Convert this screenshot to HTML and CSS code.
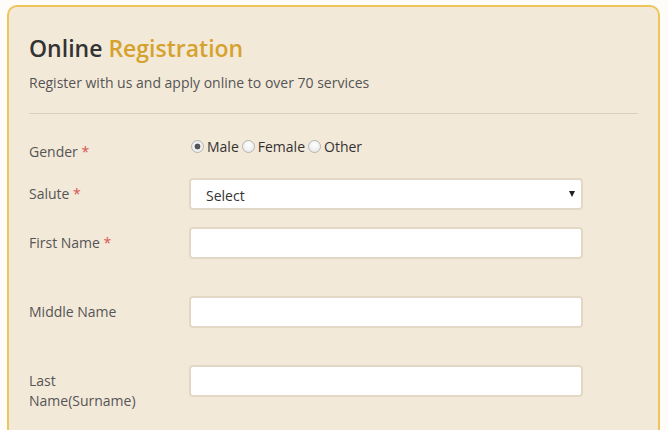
FILE: index.html
```html
<!DOCTYPE html>
<html lang="en">
<head>
<meta charset="utf-8">
<title>Online Registration</title>
<link rel="stylesheet" href="styles.css">
</head>
<body>
<div class="card">
  <h1 class="title">Online <span class="accent">Registration</span></h1>
  <p class="subtitle">Register with us and apply online to over 70 services</p>
  <hr class="divider">
  <form class="form">
    <div class="row row-gender">
      <label class="label">Gender <span class="req">*</span></label>
      <div class="field radios">
        <label class="radio"><input type="radio" name="g" checked> Male</label>
        <label class="radio"><input type="radio" name="g"> Female</label>
        <label class="radio"><input type="radio" name="g"> Other</label>
      </div>
    </div>
    <div class="row row-short">
      <label class="label">Salute <span class="req">*</span></label>
      <div class="field select-wrap">
        <select class="control select"><option>Select</option></select>
      </div>
    </div>
    <div class="row row-tall">
      <label class="label">First Name <span class="req">*</span></label>
      <div class="field"><input class="control" type="text"></div>
    </div>
    <div class="row row-tall">
      <label class="label">Middle Name</label>
      <div class="field"><input class="control" type="text"></div>
    </div>
    <div class="row">
      <label class="label">Last<br>Name(Surname)</label>
      <div class="field"><input class="control" type="text"></div>
    </div>
  </form>
</div>
</body>
</html>
```

FILE: styles.css
```css
html, body {
  margin: 0;
  padding: 0;
  background: #fefcf8;
  font-family: "Open Sans", "Liberation Sans", sans-serif;
  color: #555;
}
.card {
  margin: 5px 0 0 7px;
  width: 653px;
  box-sizing: border-box;
  height: 440px;
  background: #f3e9d9;
  border: 2px solid #edc558;
  border-radius: 10px;
  padding: 27px 20px 0 20px;
}
.title {
  margin: 0;
  font-size: 23px;
  line-height: 29px;
  font-weight: 600;
  color: #333;
}
.accent { color: #d5a22e; }
.subtitle {
  margin: 10px 0 0;
  font-size: 14px;
  line-height: 20px;
  color: #555;
}
.divider {
  margin: 20px 0 0;
  border: 0;
  border-top: 1px solid #d8d0c2;
  height: 0;
}
.form { margin-top: 22px; }
.row {
  display: grid;
  grid-template-columns: 160px 394px;
  align-items: start;
}
.row-gender { margin-bottom: 16px; }
.row-short { margin-bottom: 17px; }
.row-tall { margin-bottom: 37px; }
.label {
  font-size: 14px;
  line-height: 20px;
  padding-top: 6px;
  color: #555;
}
.row-gender .label { padding-top: 6px; }
.req { color: #d9534f; }
.radios {
  display: flex;
  gap: 3px;
  font-size: 14px;
  line-height: 20px;
  padding-left: 2px;
  padding-top: 1px;
}
.radio {
  display: flex;
  align-items: center;
  gap: 3px;
  color: #333;
}
.radio input {
  -webkit-appearance: none;
  appearance: none;
  margin: 0;
  width: 13px;
  height: 13px;
  border-radius: 50%;
  border: 1px solid #b5b5b5;
  background: radial-gradient(circle at 50% 35%, #fff 0%, #e4e4e4 100%);
  box-sizing: border-box;
  position: relative;
  top: -1px;
}
.radio input:checked {
  background: radial-gradient(circle, #555 0 2.7px, #eee 3.2px);
}
.control {
  display: block;
  width: 394px;
  height: 32px;
  box-sizing: border-box;
  border: 2px solid #e3d8c5;
  border-radius: 4px;
  background: #fff;
  font-family: "Open Sans", "Liberation Sans", sans-serif;
  font-size: 14px;
  color: #333;
  padding: 0 14px;
  outline: none;
}
.select-wrap { position: relative; }
.select {
  -webkit-appearance: none;
  appearance: none;
  padding-left: 15px;
  padding-top: 2px;
}
.select-wrap::after {
  content: "";
  position: absolute;
  right: 8px;
  top: 13px;
  border-left: 3.5px solid transparent;
  border-right: 3.5px solid transparent;
  border-top: 6px solid #222;
}
```
